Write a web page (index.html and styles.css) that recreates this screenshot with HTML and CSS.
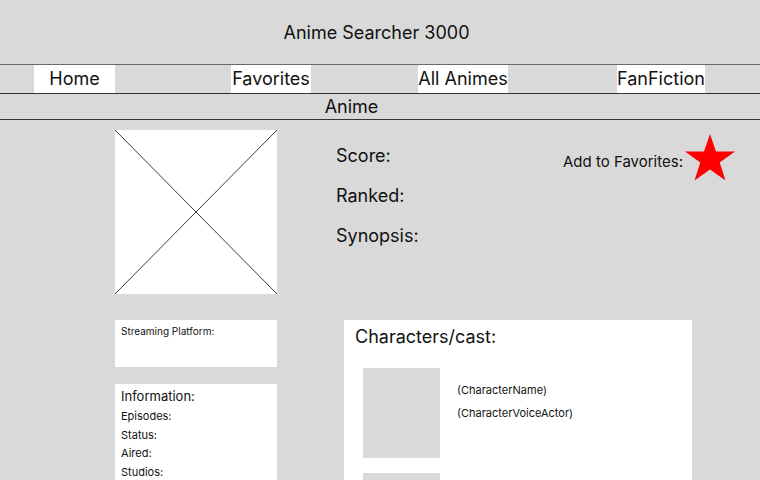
FILE: index.html
```html
<!DOCTYPE html>
<html>
<head>
<meta charset="utf-8">
<link rel="stylesheet" href="styles.css">
</head>
<body>
<header class="site-header">
  <h1 class="site-title">Anime Searcher 3000</h1>
  <nav class="nav">
    <a class="nav-item nav-home">Home</a>
    <a class="nav-item nav-fav">Favorites</a>
    <a class="nav-item nav-all">All Animes</a>
    <a class="nav-item nav-fan">FanFiction</a>
  </nav>
  <div class="section-label"><span>Anime</span></div>
</header>
<main class="main">
  <section class="top-row">
    <div class="poster">
      <svg viewBox="0 0 162 164" preserveAspectRatio="none" width="162" height="164">
        <line x1="0" y1="0" x2="162" y2="164" stroke="#3c3c3c" stroke-width="1"/>
        <line x1="162" y1="0" x2="0" y2="164" stroke="#3c3c3c" stroke-width="1"/>
      </svg>
    </div>
    <div class="stats">
      <p class="stat">Score:</p>
      <p class="stat">Ranked:</p>
      <p class="stat">Synopsis:</p>
    </div>
    <div class="fav">
      <span class="fav-label">Add to Favorites:</span>
      <svg class="star" viewBox="0 0 50 47" width="50" height="47">
        <polygon points="25,0 31,17.5 50,17.5 34.7,28.5 40.5,46.5 25,35.5 9.5,46.5 15.3,28.5 0,17.5 19,17.5" fill="#ff0000"/>
      </svg>
    </div>
  </section>
  <section class="bottom-row">
    <div class="side">
      <div class="card streaming">Streaming Platform:</div>
      <div class="card info">
        <h2 class="info-title">Information:</h2>
        <p class="info-line">Episodes:</p>
        <p class="info-line">Status:</p>
        <p class="info-line">Aired:</p>
        <p class="info-line">Studios:</p>
      </div>
    </div>
    <div class="card cast">
      <h2 class="cast-title">Characters/cast:</h2>
      <div class="char">
        <div class="char-pic"></div>
        <div class="char-text">
          <p class="char-line">(CharacterName)</p>
          <p class="char-line">(CharacterVoiceActor)</p>
        </div>
      </div>
      <div class="char">
        <div class="char-pic"></div>
        <div class="char-text"></div>
      </div>
    </div>
  </section>
</main>
</body>
</html>
```
FILE: styles.css
```css
* { box-sizing: border-box; }
html, body {
  margin: 0;
  padding: 0;
  background: #d9d9d9;
  font-family: Inter, "Noto Sans", sans-serif;
  color: #111;
  overflow: hidden;
}
body { height: 480px; }
p, h1, h2 { margin: 0; font-weight: 400; }

.site-title {
  height: 64px;
  font-size: 18px;
  line-height: 22px;
  padding-top: 22px;
  padding-right: 7px;
  text-align: center;
}

.nav {
  display: flex;
  height: 30px;
  border-top: 1px solid #6a6a6a;
  border-bottom: 1px solid #333;
}
.nav-item {
  display: block;
  height: 28px;
  background: #fff;
  font-size: 18px;
  line-height: 28px;
  text-align: center;
  color: #111;
}
.nav-home { margin-left: 34px; width: 81px; }
.nav-fav { margin-left: 116px; width: 80px; }
.nav-all { margin-left: 107px; width: 90px; }
.nav-fan { margin-left: 109px; width: 88px; }

.section-label {
  height: 26px;
  border-bottom: 1px solid #333;
  font-size: 18px;
  line-height: 25px;
  text-align: center;
  padding-right: 57px;
}

.main { padding: 10px 0 0 115px; }

.top-row {
  display: flex;
  align-items: flex-start;
}
.poster {
  width: 162px;
  height: 164px;
  background: #fff;
}
.poster svg { display: block; }
.stats {
  margin-left: 59px;
  padding-top: 6px;
}
.stat {
  font-size: 18px;
  line-height: 40px;
}
.fav {
  display: flex;
  align-items: flex-start;
  margin-left: auto;
  margin-right: 25px;
  padding-top: 4px;
}
.fav-label {
  font-size: 15px;
  line-height: 18px;
  margin-top: 19px;
  margin-right: 2px;
}
.star { display: block; }

.bottom-row {
  display: flex;
  align-items: flex-start;
  margin-top: 26px;
}
.side {
  width: 162px;
  display: flex;
  flex-direction: column;
  gap: 17px;
}
.card { background: #fff; }
.streaming {
  height: 47px;
  font-size: 10px;
  line-height: 12px;
  padding: 5px 6px 0;
}
.info {
  height: 96px;
  overflow: hidden;
  padding: 4px 6px 0;
}
.info-title {
  font-size: 13px;
  line-height: 16px;
  margin-bottom: 3px;
}
.info-line {
  font-size: 11px;
  line-height: 18.5px;
}

.cast {
  margin-left: 67px;
  width: 348px;
  height: 160px;
  overflow: hidden;
  padding: 6px 0 0 19px;
}
.cast-title {
  font-size: 18px;
  line-height: 22px;
  margin-left: -8px;
  margin-bottom: 20px;
}
.char {
  display: flex;
  margin-bottom: 15px;
}
.char-pic {
  width: 77px;
  height: 90px;
  flex-shrink: 0;
  background: #d9d9d9;
}
.char-text {
  margin-left: 17px;
  padding-top: 11px;
}
.char-line {
  font-size: 11px;
  line-height: 23px;
}
```
